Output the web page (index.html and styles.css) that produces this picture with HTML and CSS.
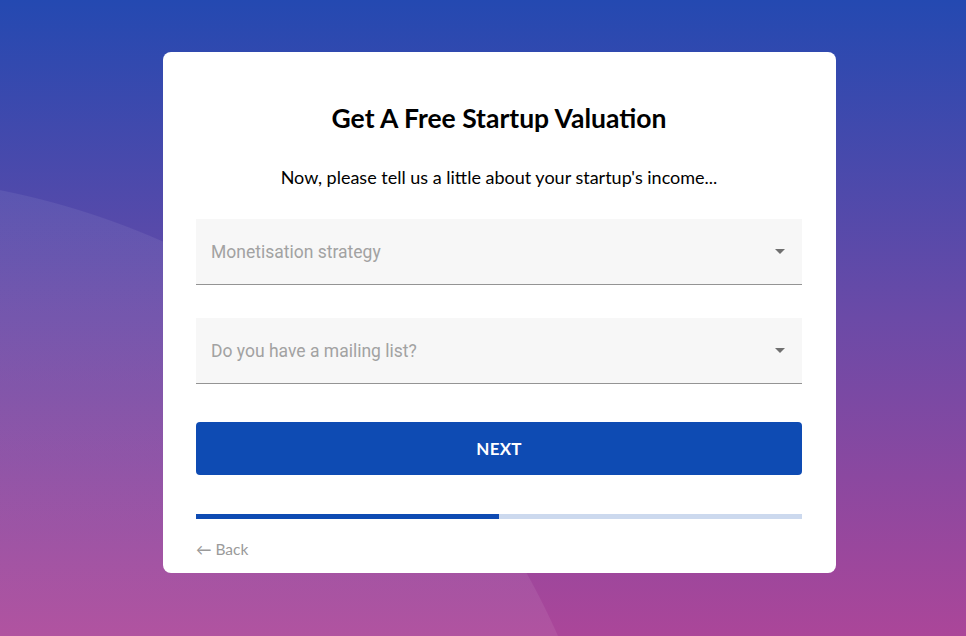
FILE: index.html
```html
<!DOCTYPE html>
<html lang="en">
<head>
<meta charset="utf-8">
<title>Get A Free Startup Valuation</title>
<link rel="stylesheet" href="styles.css">
</head>
<body>
<div class="page">
  <div class="card">
    <h1 class="title">Get A Free Startup Valuation</h1>
    <p class="subtitle">Now, please tell us a little about your startup's income...</p>
    <div class="field">
      <span class="placeholder">Monetisation strategy</span>
      <span class="caret"></span>
    </div>
    <div class="field">
      <span class="placeholder">Do you have a mailing list?</span>
      <span class="caret"></span>
    </div>
    <button class="next" type="button">NEXT</button>
    <div class="progress"><div class="progress-fill" style="width:50%"></div></div>
    <a class="back" href="#">&larr; Back</a>
  </div>
</div>
</body>
</html>
```

FILE: styles.css
```css
* { box-sizing: border-box; }
html, body { margin: 0; height: 100%; }
body {
  background:
    radial-gradient(circle 775px at -150px 950px, rgba(255,255,255,0.07) 0, rgba(255,255,255,0.07) 774px, rgba(255,255,255,0) 775px),
    linear-gradient(180deg, #2449b1 0%, #6b4aa7 50%, #ab4699 100%);
  font-family: "Lato", "Noto Sans", sans-serif;
  overflow: hidden;
}
.page {
  padding: 52px 0 0 163px;
}
.card {
  width: 673px;
  height: 521px;
  background: #fff;
  border-radius: 8px;
  padding: 43px 34px 0 33px;
  display: flex;
  flex-direction: column;
}
.title {
  margin: 0;
  text-align: center;
  font-size: 26.5px;
  font-weight: 700;
  color: #000;
  line-height: 46px;
}
.subtitle {
  margin: 22px 0 0;
  text-align: center;
  font-size: 18px;
  color: #000;
  line-height: 28px;
}
.field {
  margin-top: 28px;
  height: 66px;
  background: #f7f7f7;
  border-bottom: 1px solid #949494;
  display: flex;
  align-items: center;
  justify-content: space-between;
  padding: 0 17px 0 15px;
  font-family: "Roboto", sans-serif;
}
.field + .field { margin-top: 33px; }
.placeholder {
  font-size: 17.5px;
  color: #a2a2a2;
  padding-top: 1px;
}
.caret {
  width: 0;
  height: 0;
  border-left: 5px solid transparent;
  border-right: 5px solid transparent;
  border-top: 5px solid #707070;
}
.next {
  margin-top: 38px;
  height: 53px;
  width: 100%;
  background: #0e4bb3;
  border: 0;
  border-radius: 4px;
  color: #fff;
  font-family: "Lato", sans-serif;
  font-weight: 700;
  font-size: 17px;
  letter-spacing: 0.2px;
}
.progress {
  margin-top: 39px;
  height: 5px;
  background: #ccd9ee;
}
.progress-fill {
  height: 100%;
  background: #0e4bb3;
}
.back {
  margin-top: 21px;
  align-self: flex-start;
  color: #9a9a9a;
  font-size: 15.5px;
  text-decoration: none;
}
```
